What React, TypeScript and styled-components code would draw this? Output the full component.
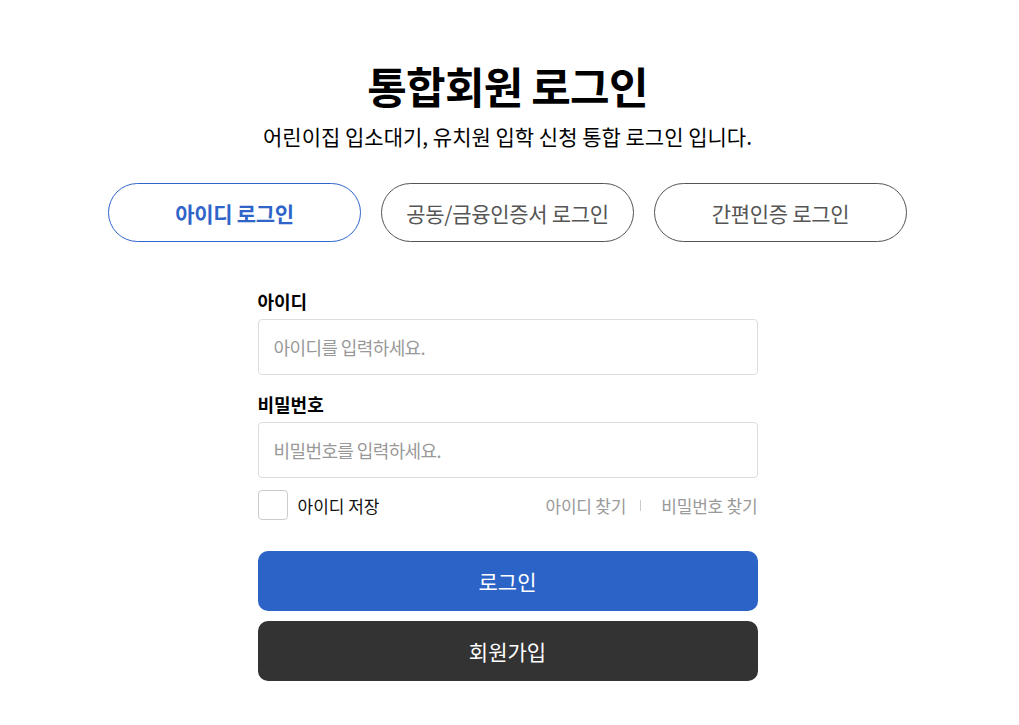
import React from "react";
import styled, { createGlobalStyle } from "styled-components";

const Global = createGlobalStyle`
  html, body { margin: 0; padding: 0; background: #fff; }
  body { font-family: "Noto Sans CJK KR", "Noto Sans", sans-serif; color: #000; }
  * { box-sizing: border-box; }
`;

const Page = styled.div`
  display: flex;
  flex-direction: column;
  align-items: center;
  padding: 60px 4px 0 0;
`;

const Title = styled.h1`
  margin: 0;
  font-size: 43px;
  line-height: 50px;
  font-weight: 700;
  letter-spacing: -0.8px;
`;

const Subtitle = styled.p`
  margin: 11px 0 0;
  font-size: 21px;
  line-height: 30px;
  letter-spacing: 0;
`;

const Tabs = styled.div`
  display: flex;
  gap: 20px;
  margin-top: 32px;
`;

const Tab = styled.button<{ $active?: boolean }>`
  width: 253px;
  height: 59px;
  border-radius: 30px;
  background: #fff;
  border: 1px solid ${(p) => (p.$active ? "#2f64c9" : "#555")};
  color: ${(p) => (p.$active ? "#2f64c9" : "#555")};
  font-family: inherit;
  font-size: 21px;
  font-weight: ${(p) => (p.$active ? 700 : 400)};
  letter-spacing: -0.3px;
  cursor: pointer;
`;

const Form = styled.form`
  width: 500px;
  margin-top: 46px;
  display: flex;
  flex-direction: column;
`;

const Label = styled.label<{ $first?: boolean }>`
  font-size: 18px;
  line-height: 26px;
  font-weight: 700;
  letter-spacing: 0;
  margin-top: ${(p) => (p.$first ? 0 : 16)}px;
`;

const Input = styled.input`
  margin-top: 5px;
  height: 56px;
  border: 1px solid #ddd;
  border-radius: 4px;
  padding: 0 15px;
  font-family: inherit;
  font-size: 18px;
  letter-spacing: -0.6px;
  color: #333;
  outline: none;
  &::placeholder { color: #999; }
`;

const OptionRow = styled.div`
  display: flex;
  align-items: center;
  justify-content: space-between;
  margin-top: 12px;
  height: 30px;
`;

const Remember = styled.label`
  display: flex;
  align-items: center;
  gap: 10px;
  font-size: 17px;
  letter-spacing: 0;
  color: #111;
`;

const Box = styled.span`
  width: 30px;
  height: 30px;
  border: 1px solid #ccc;
  border-radius: 4px;
  background: #fff;
`;

const Links = styled.div`
  display: flex;
  align-items: center;
  font-size: 17px;
  letter-spacing: -0.2px;
  color: #999;
`;

const Divider = styled.span`
  width: 1px;
  height: 11px;
  margin: 0 20px 0 14px;
  background: #ccc;
`;

const Button = styled.button<{ $dark?: boolean }>`
  height: 60px;
  border: none;
  border-radius: 10px;
  background: ${(p) => (p.$dark ? "#333" : "#2c63c6")};
  color: #fff;
  font-family: inherit;
  font-size: 21px;
  letter-spacing: 0;
  margin-top: ${(p) => (p.$dark ? 10 : 31)}px;
  cursor: pointer;
`;

export default function App() {
  return (
    <>
      <Global />
      <Page>
        <Title>통합회원 로그인</Title>
        <Subtitle>어린이집 입소대기, 유치원 입학 신청 통합 로그인 입니다.</Subtitle>
        <Tabs>
          <Tab $active>아이디 로그인</Tab>
          <Tab>공동/금융인증서 로그인</Tab>
          <Tab>간편인증 로그인</Tab>
        </Tabs>
        <Form onSubmit={(e) => e.preventDefault()}>
          <Label $first>아이디</Label>
          <Input placeholder="아이디를 입력하세요." />
          <Label>비밀번호</Label>
          <Input type="password" placeholder="비밀번호를 입력하세요." />
          <OptionRow>
            <Remember>
              <Box />
              아이디 저장
            </Remember>
            <Links>
              <span>아이디 찾기</span>
              <Divider />
              <span>비밀번호 찾기</span>
            </Links>
          </OptionRow>
          <Button type="submit">로그인</Button>
          <Button type="button" $dark>회원가입</Button>
        </Form>
      </Page>
    </>
  );
}
